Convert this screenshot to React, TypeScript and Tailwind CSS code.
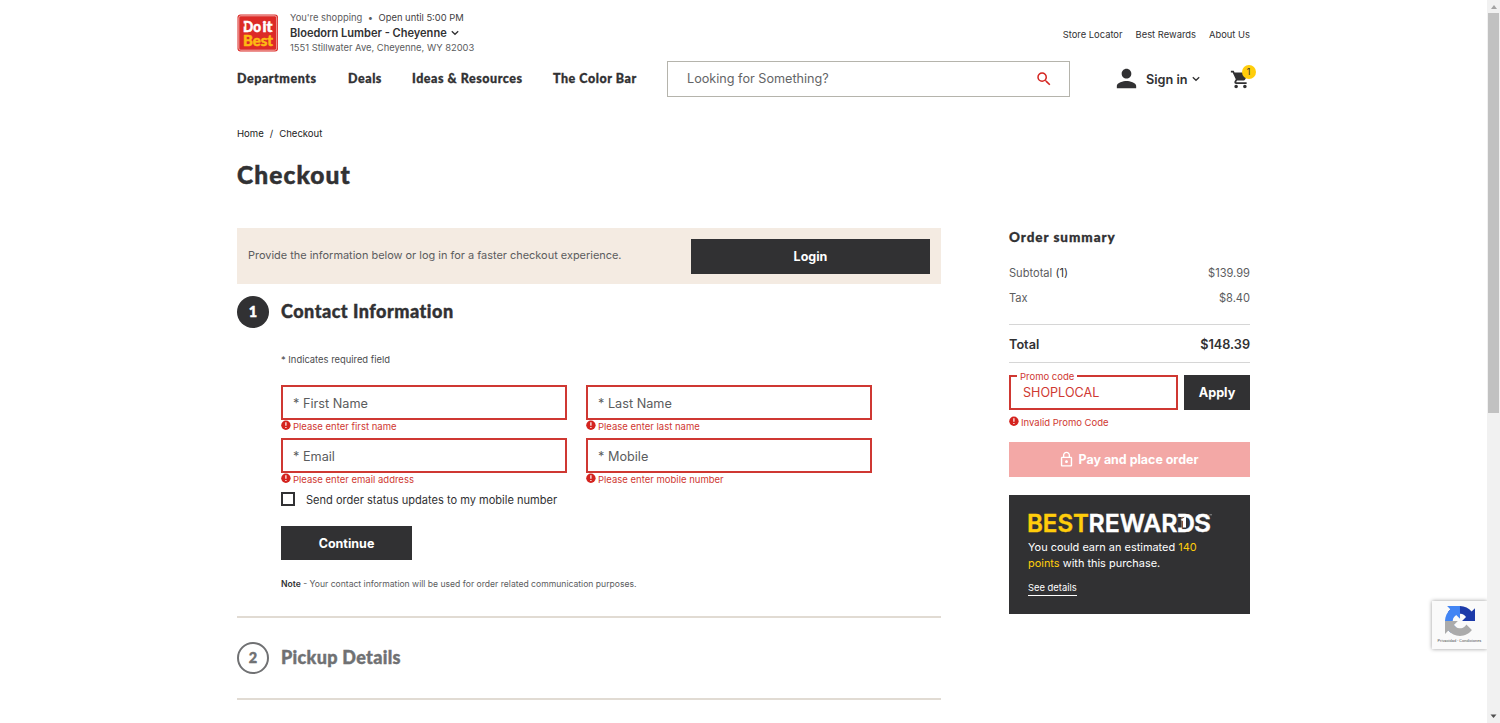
import type { ReactNode } from "react";
import { MdLockOutline, MdPerson, MdSearch, MdShoppingCart } from "react-icons/md";

const navItems = [
  { label: "Departments", className: "w-[111px]" },
  { label: "Deals", className: "w-[64px]" },
  { label: "Ideas & Resources", className: "w-[141px]" },
  { label: "The Color Bar", className: "w-[114px]" },
];

const fields = [
  { label: "First Name", error: "Please enter first name" },
  { label: "Last Name", error: "Please enter last name" },
  { label: "Email", error: "Please enter email address" },
  { label: "Mobile", error: "Please enter mobile number" },
];

function Logo() {
  return (
    <svg width="42" height="38" viewBox="0 0 42 38" className="shrink-0">
      <rect x="0.5" y="0.5" width="40.5" height="37" rx="3" fill="#dc2a27" />
      <rect x="1.800" y="1.800" width="37.900" height="34.400" rx="2" fill="none" stroke="#f6c9c5" strokeWidth="0.8" />
      <g fontFamily="Lato" fontWeight="900" fontSize="15" strokeWidth="0.5">
        <text x="6" y="17.500" fill="#fff" stroke="#fff" textLength="18" lengthAdjust="spacingAndGlyphs">Do</text>
        <text x="25.500" y="17.500" fill="#fff" stroke="#fff" textLength="10" lengthAdjust="spacingAndGlyphs">it</text>
        <text x="6" y="31.500" fill="#fdb913" stroke="#fdb913" textLength="30" lengthAdjust="spacingAndGlyphs">Best</text>
      </g>
      <path d="M5 9.500h2.600v3H5z" fill="#dc2a27" />
    </svg>
  );
}

function RewardsLogo() {
  return (
    <svg width="186" height="20" viewBox="0 0 186 20" className="block overflow-visible">
      <g fontFamily="Inter" fontSize="24.500" fontWeight="600" strokeWidth="0.4">
        <text x="-1" y="18.800" fill="#ffcd0b" stroke="#ffcd0b" textLength="62" lengthAdjust="spacingAndGlyphs">BEST</text>
        <text x="60.500" y="18.800" fill="#fff" stroke="#fff" textLength="89" lengthAdjust="spacingAndGlyphs">REWAR</text>
        <text x="148.500" y="18.800" fill="#fff" stroke="#fff" textLength="18.500" lengthAdjust="spacingAndGlyphs">D</text>
        <text x="166" y="18.800" fill="#fff" stroke="#fff" textLength="17" lengthAdjust="spacingAndGlyphs">S</text>
      </g>
      <path d="M181.500 1.800h2.500" stroke="#aaa" strokeWidth="0.800" />
      <path d="M149.500 4h4.200v10.500h-4.200z" fill="#313133" />
      <path d="M152.500 7l5.500-4v11.500h-3V8z" fill="#fff" />
    </svg>
  );
}

function Chevron({ className }: { className?: string }) {
  return (
    <svg width="8" height="6" viewBox="0 0 8 6" fill="none" stroke="#313133" strokeWidth="1.3" className={className}>
      <path d="M0.800 1.200L4 4.300l3.200-3.100" />
    </svg>
  );
}

function ErrorIcon() {
  return (
    <svg width="10" height="10" viewBox="0 0 10 10" className="shrink-0">
      <circle cx="4.900" cy="5.200" r="4.700" fill="#d4241f" />
      <path d="M4.900 2.200v3.600M4.900 6.900v1.200" stroke="#fff" strokeWidth="1.200" />
    </svg>
  );
}

function Field({ label, error }: { label: string; error: string }) {
  return (
    <div className="h-[53px]">
      <div className="flex h-[35px] items-center border-2 border-[#cf3832] pl-[10px] pt-[2px] text-[12.7px] text-[#5b5c5e]">
        * {label}
      </div>
      <div className="flex h-[14px] text-[9.5px] leading-[14px] text-[#cf3832]">
        <ErrorIcon />
        <span className="ml-[2px]">{error}</span>
      </div>
    </div>
  );
}

function Header() {
  return (
    <header className="h-[97px]">
      <div className="flex h-[61px] justify-between pt-[14px]">
        <div className="flex">
          <Logo />
          <div className="-mt-[3px] ml-[11px] text-[9.4px] leading-[14px] text-[#5b5c5e]">
            <div className="flex">
              You're shopping<span className="mx-[5.5px]">•</span>
              <span className="text-[#3f4042]">Open until 5:00 PM</span>
            </div>
            <div className="flex h-4 items-center text-[11.05px] font-semibold text-[#313133]">
              Bloedorn Lumber - Cheyenne
              <Chevron className="ml-[4px]" />
            </div>
            <div>1551 Stillwater Ave, Cheyenne, WY 82003</div>
          </div>
        </div>
        <div className="mt-[14px] flex gap-[13px] text-[9.4px] leading-[14px] text-[#313133]">
          <span>Store Locator</span>
          <span>Best Rewards</span>
          <span>About Us</span>
        </div>
      </div>
      <div className="flex h-9 items-center">
        <nav className="flex shrink-0 font-['Lato'] text-[12.5px] font-black text-[#313133] [-webkit-text-stroke:0.3px]">
          {navItems.map((item) => (
            <span key={item.label} className={`whitespace-nowrap tracking-[0.54px] ${item.className}`}>
              {item.label}
            </span>
          ))}
        </nav>
        <div className="flex h-9 w-[403px] shrink-0 items-center justify-between border border-[#b5b4ac] pl-[19px] pr-[16px] text-[12.65px] text-[#646567]">
          Looking for Something?
          <MdSearch size={18} className="text-[#d4241f]" />
        </div>
        <MdPerson size={29} className="-mt-[2px] ml-[42px] shrink-0 text-[#313133]" />
        <span className="mt-px ml-[5px] text-[12.7px] font-semibold whitespace-nowrap text-[#313133]">Sign in</span>
        <Chevron className="ml-[4px] shrink-0" />
        <div className="relative ml-[30px] shrink-0">
          <MdShoppingCart size={21} className="text-[#313133]" />
          <span className="absolute -top-[4px] left-[12px] flex h-[14px] w-[14px] items-center justify-center rounded-full bg-[#ffcd0b] text-[9px] text-[#313133]">
            1
          </span>
        </div>
      </div>
    </header>
  );
}

function StepTitle({ number, title, active }: { number: number; title: string; active?: boolean }) {
  return (
    <div className="flex h-8 items-center font-['Lato'] font-black [-webkit-text-stroke:0.4px]">
      <div
        className={`flex h-8 w-8 items-center justify-center rounded-full pb-px text-[14.5px] ${
          active ? "bg-[#313133] text-white" : "border-2 border-[#707173] text-[#707173]"
        }`}
      >
        {number}
      </div>
      <h2
        className={`ml-3 pb-[2px] text-[18px] ${
          active ? "tracking-[0.5px] text-[#313133]" : "tracking-[0.3px] text-[#707173]"
        }`}
      >
        {title}
      </h2>
    </div>
  );
}

function CheckoutForm() {
  return (
    <main className="w-[704px]">
      <div className="flex h-14 items-center justify-between bg-[#f4ebe2] px-[11px] text-[10.95px] text-[#5b5c5e]">
        <span className="pb-px">Provide the information below or log in for a faster checkout experience.</span>
        <button className="h-[35px] w-[239px] bg-[#313133] pt-[2px] text-[12.5px] font-bold text-white">Login</button>
      </div>
      <div className="mt-3">
        <StepTitle number={1} title="Contact Information" active />
      </div>
      <div className="pl-11">
        <p className="mt-[25px] h-8 text-[9.4px] leading-[14px] text-[#4b4c4e]">* Indicates required field</p>
        <div className="grid w-[591px] grid-cols-2 gap-x-[19px]">
          {fields.map((field) => (
            <Field key={field.label} {...field} />
          ))}
        </div>
        <label className="mt-px flex h-[14px] items-center text-[11.05px] text-[#313133]">
          <span className="h-[14px] w-[14px] border-2 border-[#313133]" />
          <span className="mt-[2px] ml-[11px]">Send order status updates to my mobile number</span>
        </label>
        <button className="mt-5 block h-[34px] w-[131px] bg-[#313133] pt-[2px] text-[12.5px] font-bold text-white">Continue</button>
        <p className="mt-[17px] text-[8.6px] leading-[14px] text-[#5b5c5e]">
          <b className="font-semibold text-[#313133]">Note</b> - Your contact information will be used for order related
          communication purposes.
        </p>
      </div>
      <div className="mt-[25px] border-y-2 border-[#e1dbd3] py-6">
        <StepTitle number={2} title="Pickup Details" />
      </div>
    </main>
  );
}

function Row({ label, value }: { label: ReactNode; value: string }) {
  return (
    <div className="flex h-[25px] items-center justify-between">
      <span>{label}</span>
      <span>{value}</span>
    </div>
  );
}

function OrderSummary() {
  return (
    <aside className="w-[241px] text-[11.1px] text-[#5b5c5e]">
      <h3 className="h-[33px] font-['Lato'] text-[13.5px] leading-[18px] font-black tracking-[0.95px] text-[#313133] [-webkit-text-stroke:0.3px]">
        Order summary
      </h3>
      <Row label={<>Subtotal <span className="text-[#313133]">(1)</span></>} value="$139.99" />
      <Row label="Tax" value="$8.40" />
      <div className="mt-[13px] flex h-[39px] items-center justify-between border-y border-[#d6d6d6] pt-[2px] text-[12.7px] font-semibold text-[#313133]">
        <span>Total</span>
        <span>$148.39</span>
      </div>
      <div className="mt-3 flex justify-between">
        <div className="relative flex h-[35px] w-[169px] items-center border-2 border-[#cf3832] pt-px pl-3 text-[12.6px] text-[#cf3832]">
          SHOPLOCAL
          <span className="absolute -top-[6px] left-[6px] bg-white px-[3px] text-[9.5px] leading-3">Promo code</span>
        </div>
        <button className="h-[35px] w-[66px] bg-[#313133] pt-px text-[12.7px] font-bold text-white">Apply</button>
      </div>
      <div className="mt-[6px] flex h-[26px] text-[9.5px] leading-[14px] text-[#cf3832]">
        <ErrorIcon />
        <span className="ml-[2px]">Invalid Promo Code</span>
      </div>
      <button className="flex h-[35px] w-full items-center justify-center gap-1 bg-[#f3a8a6] pr-[3px] text-[12.45px] font-bold text-white">
        <MdLockOutline size={17} />
        <span className="mt-px">Pay and place order</span>
      </button>
      <section className="mt-[18px] h-[119px] bg-[#313133] pt-[18px] pl-[19px] text-[10.95px] leading-[16px] text-white">
        <RewardsLogo />
        <p className="mt-[6px]">
          You could earn an estimated <span className="text-[#ffcd0b]">140</span>
          <br />
          <span className="text-[#ffcd0b]">points</span> with this purchase.
        </p>
        <a className="mt-[9px] inline-block border-b border-white text-[9.4px] leading-[15px]">See details</a>
      </section>
    </aside>
  );
}

function Recaptcha() {
  return (
    <div className="absolute top-[601px] right-[13px] flex h-12 w-[55px] flex-col items-center bg-[#fafafa] pt-[5px] shadow-[0_0_4px_#999] [clip-path:inset(-5px_0_-5px_-5px)]">
      <svg width="30" height="30" viewBox="0 0 64 64">
        <path d="M64 32c0-.5 0-.9 0-1.400V4.600l-7.200 7.200C50.900 4.600 42 0 32 0 21.600 0 12.400 5 6.500 12.700l11.800 11.900c1.200-2.100 2.800-4 4.700-5.300 2-1.600 4.900-2.900 8.900-2.900.5 0 .9.100 1.200.2 4.900.4 9.200 3.100 11.700 7.100l-8.400 8.400L64 32" fill="#1c3aa9" />
        <path d="M31.900 0H4.500l7.200 7.200C4.600 13 0 21.900 0 31.900c0 10.400 5 19.600 12.700 25.400l11.900-11.800c-2.100-1.200-4-2.800-5.300-4.700-1.600-2-2.900-4.900-2.900-8.900 0-.5.100-.9.200-1.200.4-4.900 3.100-9.200 7.100-11.700l8.400 8.400L31.900 0" fill="#4285f4" />
        <path d="M0 32v27.500l7.200-7.200C13 59.400 21.900 64 31.900 64c10.400 0 19.600-5 25.500-12.700L45.500 39.400c-1.200 2.100-2.800 4-4.700 5.300-2 1.600-4.900 2.900-8.900 2.900-.5 0-.9-.1-1.200-.2-4.900-.4-9.200-3.100-11.700-7.100l8.400-8.400L0 32" fill="#ababab" />
      </svg>
      <span className="mt-px font-['Roboto'] text-[4px] leading-[8px] whitespace-nowrap text-[#555]">Privacidad - Condiciones</span>
    </div>
  );
}

function Scrollbar() {
  return (
    <div className="flex w-[13px] flex-col items-center justify-between bg-[#f1f1f1]">
      <div className="flex flex-col items-center">
        <svg width="13" height="13">
          <path d="M4 9l3-4 3 4z" fill="#a3a3a3" />
        </svg>
        <div className="h-[400px] w-[11px] bg-[#c1c1c1]" />
      </div>
      <svg width="13" height="13">
        <path d="M3.500 4.500h6l-3 3.500z" fill="#505050" />
      </svg>
    </div>
  );
}

export default function App() {
  return (
    <div className="relative flex h-[723px] w-[1500px] overflow-hidden bg-white font-['Inter',sans-serif]">
      <div className="flex-1 pl-[237px]">
        <div className="w-[1013px]">
          <Header />
          <div className="mt-[30px] flex gap-[6px] text-[9.55px] leading-[14px] text-[#222]">
            <span>Home</span>
            <span>/</span>
            <span>Checkout</span>
          </div>
          <h1 className="mt-[18px] h-[69px] font-['Lato'] text-[24.5px] leading-[32px] font-black tracking-[1.1px] text-[#313133] [-webkit-text-stroke:0.5px]">
            Checkout
          </h1>
          <div className="flex justify-between">
            <CheckoutForm />
            <OrderSummary />
          </div>
        </div>
      </div>
      <Recaptcha />
      <Scrollbar />
    </div>
  );
}
